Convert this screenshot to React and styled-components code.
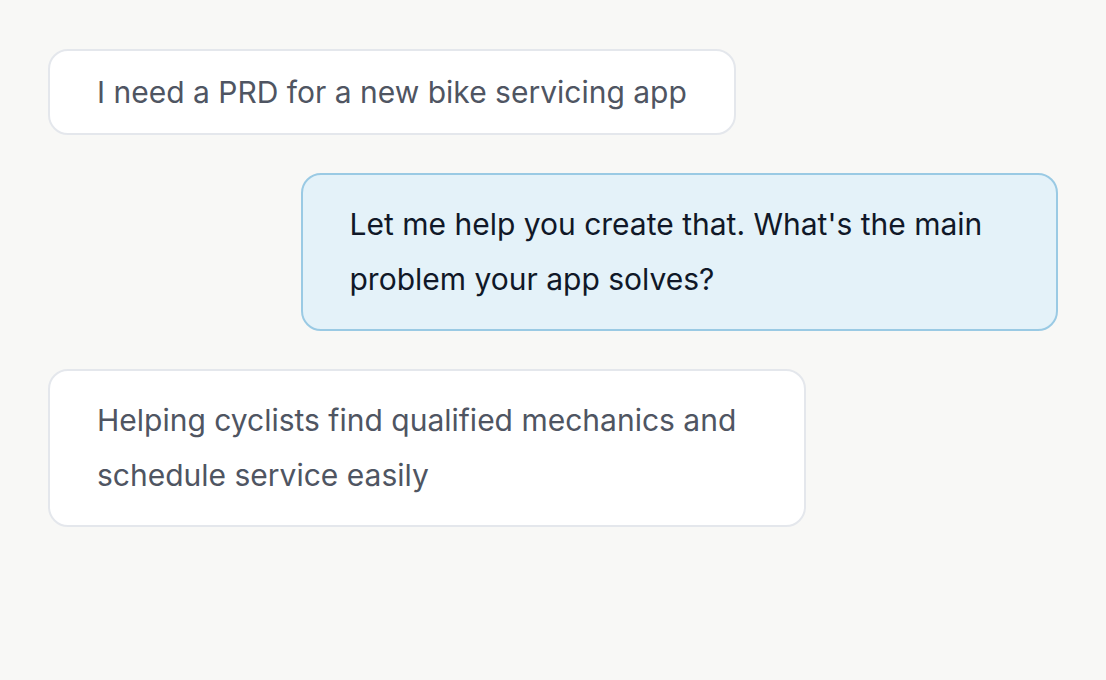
import React from "react";
import styled, { createGlobalStyle } from "styled-components";

const GlobalStyle = createGlobalStyle`
  html, body { margin: 0; padding: 0; background: #f8f8f6; }
  body { font-family: Inter, "Noto Sans", sans-serif; }
  * { box-sizing: border-box; }
`;

const Page = styled.main`
  min-height: 680px;
  padding: 49px 48px 48px;
  display: flex;
  flex-direction: column;
  gap: 38px;
  background: #f8f8f6;
`;

const Bubble = styled.div`
  align-self: ${(p) => (p.$assistant ? "flex-end" : "flex-start")};
  max-width: 75%;
  width: fit-content;
  padding: 22px 47px;
  border-radius: 20px;
  border: 2px solid ${(p) => (p.$assistant ? "#9acae4" : "#e4e7ec")};
  background: ${(p) => (p.$assistant ? "#e4f2f9" : "#ffffff")};
  color: ${(p) => (p.$assistant ? "#101828" : "#4f5562")};
  font-size: 30px;
  line-height: ${(p) => (p.$multi ? "55px" : "38px")};
  letter-spacing: 0;
`;

const messages = [
  { text: "I need a PRD for a new bike servicing app", assistant: false, multi: false },
  {
    text: "Let me help you create that. What's the main problem your app solves?",
    assistant: true,
    multi: true,
  },
  {
    text: "Helping cyclists find qualified mechanics and schedule service easily",
    assistant: false,
    multi: true,
  },
];

export default function App() {
  return (
    <>
      <GlobalStyle />
      <Page>
        {messages.map((m, i) => (
          <Bubble key={i} $assistant={m.assistant} $multi={m.multi}>
            {m.text}
          </Bubble>
        ))}
      </Page>
    </>
  );
}
